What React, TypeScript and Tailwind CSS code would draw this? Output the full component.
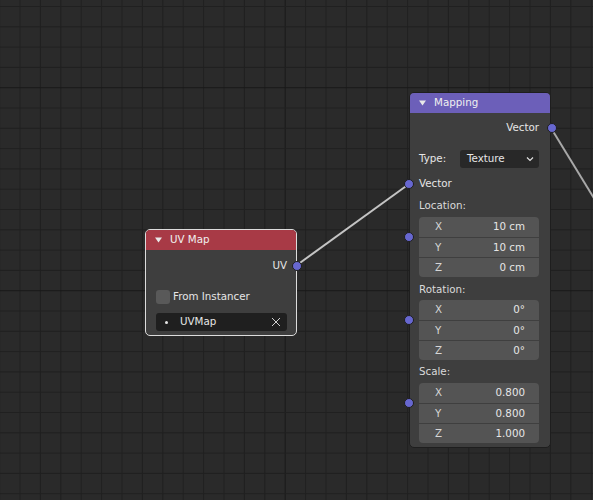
import React from 'react';

const font = { fontFamily: '"DejaVu Sans", "Liberation Sans", sans-serif' };

function Grid() {
  const xs: number[] = [];
  const ys: number[] = [];
  for (let x = 20 - 20.4; x < 600; x += 20.4) xs.push(x);
  for (let y = 87.7 - 5 * 20.3; y < 510; y += 20.3) ys.push(y);
  return (
    <svg className="absolute inset-0" width={593} height={500}>
      {xs.map((x, i) => (
        <line key={'x' + i} x1={x} y1={0} x2={x} y2={500} stroke={i === 14 ? '#191919' : '#202020'} strokeWidth={1} />
      ))}
      {ys.map((y, i) => (
        <line key={'y' + i} x1={0} y1={y} x2={593} y2={y} stroke={i === 5 || i === 15 ? '#191919' : '#202020'} strokeWidth={1} />
      ))}
    </svg>
  );
}

function Links() {
  return (
    <svg className="absolute inset-0" width={593} height={500}>
      <line x1={297} y1={265} x2={409} y2={184} stroke="#c4c4c4" strokeWidth={2} />
      <line x1={551} y1={128} x2={620} y2={240.8} stroke="#a8a8a8" strokeWidth={2} />
    </svg>
  );
}

function Socket({ className }: { className: string }) {
  return <span className={'absolute w-[10px] h-[10px] rounded-full bg-[#6767d0] border border-[#1e1e1e] ' + className} />;
}

function Triangle() {
  return (
    <svg width="7" height="6" viewBox="0 0 7 6" className="shrink-0">
      <polygon points="0,0.5 7,0.5 3.5,5.5" fill="#e8e8e8" />
    </svg>
  );
}

function VectorBox({ rows }: { rows: [string, string][] }) {
  return (
    <div className="relative rounded-[4px] bg-[#545454] flex flex-col">
      {rows.map(([k, v], i) => (
        <div
          key={k}
          className={'h-[20px] flex items-center justify-between pl-[16px] pr-[14px] ' + (i > 0 ? 'border-t border-[#3f3f3f]' : '')}
        >
          <span className="text-[#d6d6d6]">{k}</span>
          <span className="text-[#e6e6e6]">{v}</span>
        </div>
      ))}
      <Socket className="left-[-15px] top-[15px]" />
    </div>
  );
}

function UVMapNode() {
  return (
    <div
      className="absolute left-[145px] top-[229px] w-[152px] h-[107px] rounded-[5px] border border-[#dcdcdc] bg-[#3e3e3e] flex flex-col text-[10.3px] text-[#e6e6e6]"
      style={font}
    >
      <div className="h-[20px] bg-[#a83a46] rounded-t-[4px] flex items-center gap-[8px] pl-[9px] text-[#f0f0f0]">
        <Triangle />
        <span>UV Map</span>
      </div>
      <div className="relative h-[20px] mt-[6px] flex items-center justify-end pr-[9px]">
        <span>UV</span>
        <Socket className="right-[-6px] top-[5px]" />
      </div>
      <div className="h-[20px] mt-[11px] flex items-center pl-[10px] gap-[3px]">
        <span className="w-[14px] h-[14px] rounded-[3px] bg-[#595959]" />
        <span>From Instancer</span>
      </div>
      <div className="mx-[9px] ml-[10px] mt-[6px] h-[18px] rounded-[3px] bg-[#1f1f1f] flex items-center pl-[9px] pr-[6px]">
        <span className="w-[3px] h-[3px] rounded-full bg-[#e6e6e6]" />
        <span className="ml-[12px] flex-1">UVMap</span>
        <svg width="10" height="10" viewBox="0 0 10 10">
          <path d="M1 1 L9 9 M9 1 L1 9" stroke="#d0d0d0" strokeWidth="1" />
        </svg>
      </div>
    </div>
  );
}

function MappingNode() {
  return (
    <div
      className="absolute left-[409px] top-[92px] w-[142px] h-[356px] rounded-[5px] border border-[#1e1e1e] bg-[#3e3e3e] flex flex-col text-[10.3px] text-[#e6e6e6]"
      style={font}
    >
      <div className="h-[20px] bg-[#6c5fb9] rounded-t-[4px] flex items-center gap-[8px] pl-[9px] text-[#f0f0f0]">
        <Triangle />
        <span>Mapping</span>
      </div>
      <div className="px-[9px] flex flex-col">
        <div className="relative h-[20px] mt-[5px] flex items-center justify-end pr-[2px]">
          <span>Vector</span>
          <Socket className="right-[-16px] top-[5px]" />
        </div>
        <div className="h-[18px] mt-[12px] flex items-center">
          <span className="w-[41px]">Type:</span>
          <div className="flex-1 h-[18px] rounded-[3px] bg-[#282828] flex items-center pl-[7px] pr-[5px] mr-[2px]">
            <span className="flex-1">Texture</span>
            <svg width="8" height="6" viewBox="0 0 8 6">
              <path d="M1 1.5 L4 4.5 L7 1.5" fill="none" stroke="#e0e0e0" strokeWidth="1.2" />
            </svg>
          </div>
        </div>
        <div className="relative h-[20px] mt-[6px] flex items-center">
          <span>Vector</span>
          <Socket className="left-[-15px] top-[5px]" />
        </div>
        <div className="h-[20px] mt-[2px] flex items-center text-[#dadada]">Location:</div>
        <div className="mt-[1px] mr-[2px]">
          <VectorBox rows={[['X', '10 cm'], ['Y', '10 cm'], ['Z', '0 cm']]} />
        </div>
        <div className="h-[20px] mt-[3px] flex items-center text-[#dadada]">Rotation:</div>
        <div className="mr-[2px]">
          <VectorBox rows={[['X', '0°'], ['Y', '0°'], ['Z', '0°']]} />
        </div>
        <div className="h-[20px] mt-[2px] flex items-center text-[#dadada]">Scale:</div>
        <div className="mt-[1px] mr-[2px]">
          <VectorBox rows={[['X', '0.800'], ['Y', '0.800'], ['Z', '1.000']]} />
        </div>
      </div>
    </div>
  );
}

export default function App() {
  return (
    <div className="relative w-[593px] h-[500px] overflow-hidden bg-[#2a2a2a]">
      <Grid />
      <Links />
      <UVMapNode />
      <MappingNode />
    </div>
  );
}
